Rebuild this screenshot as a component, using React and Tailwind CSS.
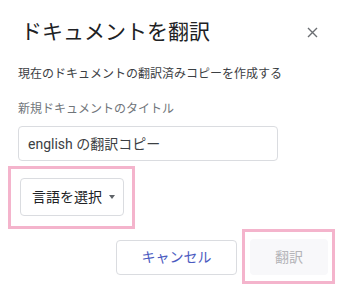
import React from "react";

const Close = () => (
  <svg width="11" height="11" viewBox="0 0 11 11" className="block">
    <path d="M1 1 L10 10 M10 1 L1 10" stroke="#6b6e72" strokeWidth="1.4" fill="none" />
  </svg>
);

export default function App() {
  return (
    <div className="w-[345px] h-[287px] bg-white overflow-hidden font-['Roboto','Noto_Sans_CJK_JP',sans-serif]">
      {/* Header */}
      <div className="flex items-center justify-between pl-[21px] pr-[27px] pt-[18px]">
        <h1 className="text-[21px] leading-[28px] text-[#202124] font-normal">ドキュメントを翻訳</h1>
        <button className="p-0">
          <Close />
        </button>
      </div>

      <div className="px-[18px]">
        <p className="mt-[20px] text-[12px] leading-[16px] text-[#3c4043]">
          現在のドキュメントの翻訳済みコピーを作成する
        </p>
        <p className="mt-[19px] text-[12px] leading-[16px] text-[#70757a]">新規ドキュメントのタイトル</p>

        <div className="mt-[9px] w-[260px] h-[35px] border border-[#dadce0] rounded-[4px] flex items-center px-[9px]">
          <span className="text-[14px] leading-[20px] text-[#3c4043]">english の翻訳コピー</span>
        </div>

        {/* Language select */}
        <div className="mt-[5px] -ml-[10px] w-[127px] h-[63px] border-[3px] border-[#f4b4cc] pl-[9px] pt-[9px]">
          <button className="w-[104px] h-[38px] border border-[#dadce0] rounded-[4px] flex items-center pl-[11px] gap-[7px] text-[14px] leading-[20px] text-[#202124]">
            言語を選択
            <span className="w-0 h-0 border-l-[3.5px] border-r-[3.5px] border-t-[4px] border-l-transparent border-r-transparent border-t-[#5f6368]" />
          </button>
        </div>
      </div>

      {/* Footer buttons */}
      <div className="flex items-center justify-end gap-[5px] pr-[10px]">
        <button className="mt-[1px] w-[121px] h-[35px] border border-[#dadce0] rounded-[4px] text-[14px] leading-[20px] text-[#4a5ac0]">
          キャンセル
        </button>
        <div className="w-[93px] h-[55px] border-[3px] border-[#f4b4cc] pl-[5px] pt-[7px]">
          <button className="w-[78px] h-[36px] rounded-[4px] bg-[#f8f8fa] text-[14px] leading-[20px] text-[#b4b4b8]">
            翻訳
          </button>
        </div>
      </div>
    </div>
  );
}
